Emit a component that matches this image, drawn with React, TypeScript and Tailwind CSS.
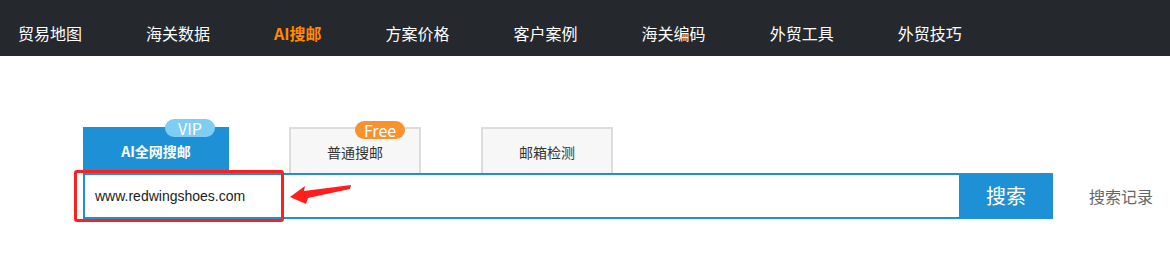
import React from 'react'

const navItems = ['贸易地图', '海关数据', 'AI搜邮', '方案价格', '客户案例', '海关编码', '外贸工具', '外贸技巧']

const cjk = { fontFamily: '"Noto Sans CJK SC", "Microsoft YaHei", sans-serif' }

const Badge: React.FC<{ label: string; className: string }> = ({ label, className }) => (
  <span
    className={`absolute -top-[8px] right-[14px] flex h-[18px] w-[50px] items-center justify-center rounded-full text-[16px] font-normal leading-none text-white ${className}`}
  >
    {label}
  </span>
)

export default function App() {
  return (
    <div className="min-h-[259px] w-[1170px] bg-white" style={cjk}>
      <nav className="flex h-[56px] items-center gap-[64px] bg-[#25282d] pl-[18px] pt-[10px]">
        {navItems.map((item) => (
          <a
            key={item}
            className={`text-[16px] leading-[24px] ${item === 'AI搜邮' ? 'font-bold text-[#ff8a00]' : 'text-white'}`}
          >
            {item}
          </a>
        ))}
      </nav>

      <div className="pl-[83px] pt-[71px]">
        <div className="flex items-end gap-[60px]">
          <div className="relative flex h-[46px] w-[146px] items-center justify-center bg-[#1e91d6] pt-[3px] text-[14px] font-bold text-white">
            AI全网搜邮
            <Badge label="VIP" className="bg-[#7ecdf2]" />
          </div>
          <div className="relative flex h-[46px] w-[132px] items-center justify-center border-2 border-b-0 border-[#dddddd] bg-[#f7f7f7] pt-[3px] text-[14px] text-[#333333]">
            普通搜邮
            <Badge label="Free" className="bg-[#f7922f]" />
          </div>
          <div className="relative flex h-[46px] w-[132px] items-center justify-center border-2 border-b-0 border-[#dddddd] bg-[#f7f7f7] pt-[3px] text-[14px] text-[#333333]">
            邮箱检测
          </div>
        </div>

        <div className="relative flex items-center">
          <div className="flex h-[46px] w-[876px] items-center border-2 border-r-0 border-[#1e91d6] pl-[10px]">
            <span className="text-[14px] text-[#222222]" style={{ fontFamily: '"Liberation Sans", Arial, sans-serif' }}>
              www.redwingshoes.com
            </span>
          </div>
          <button className="flex h-[46px] w-[94px] items-center justify-center bg-[#1e91d6] text-[20px] text-white">
            搜索
          </button>
          <span className="ml-[36px] text-[16px] text-[#666666]">搜索记录</span>

          <div className="pointer-events-none absolute -left-[9px] -top-[3px] h-[52px] w-[210px] rounded-[3px] border-[3px] border-[#ff1f1f]" />
          <svg
            className="pointer-events-none absolute left-[207px] top-[12px]"
            width="64"
            height="22"
            viewBox="0 0 64 22"
          >
            <polygon points="0,12 15,1 14,6 61,0 60,4 18,13 16,19" fill="#ff1f1f" />
          </svg>
        </div>
      </div>
    </div>
  )
}
